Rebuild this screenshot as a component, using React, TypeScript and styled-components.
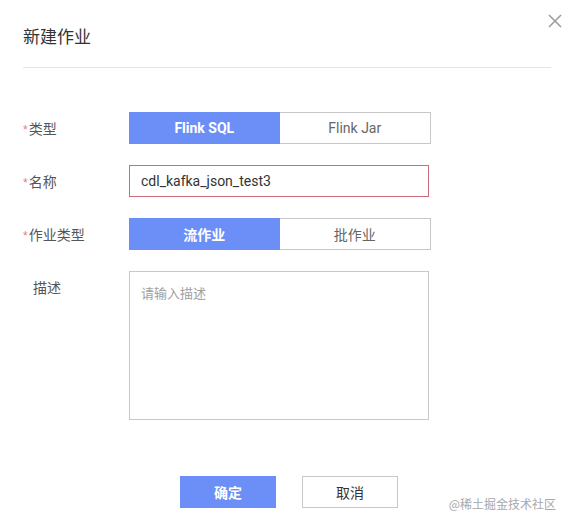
import React, { useState } from "react";
import styled, { createGlobalStyle } from "styled-components";

const GlobalStyle = createGlobalStyle`
  html, body {
    margin: 0;
    padding: 0;
    background: #ffffff;
  }
  body {
    font-family: "Roboto", "Noto Sans CJK SC", sans-serif;
  }
  * {
    box-sizing: border-box;
  }
`;

const Dialog = styled.div`
  position: relative;
  width: 571px;
  height: 525px;
  padding: 0 20px 0 23px;
  background: #fff;
  display: flex;
  flex-direction: column;
`;

const Header = styled.div`
  height: 68px;
  padding-top: 23px;
  border-bottom: 1px solid #e4e4e4;
`;

const Title = styled.h2`
  margin: 0;
  font-size: 17px;
  font-weight: 400;
  color: #333;
  line-height: 26px;
  font-family: "Noto Sans CJK SC", sans-serif;
`;

const CloseButton = styled.button`
  position: absolute;
  top: 11px;
  right: 6px;
  width: 20px;
  height: 20px;
  padding: 0;
  border: none;
  background: transparent;
  cursor: pointer;
  display: flex;
  align-items: center;
  justify-content: center;
`;

const Form = styled.div`
  display: flex;
  flex-direction: column;
  gap: 21px;
  padding-top: 44px;
`;

const Row = styled.div`
  display: flex;
  align-items: flex-start;
`;

const Label = styled.div<{ $required?: boolean }>`
  width: 106px;
  height: 32px;
  line-height: 32px;
  font-size: 14px;
  color: #555;
  padding-left: ${(p) => (p.$required ? "0" : "10px")};
  font-family: "Noto Sans CJK SC", sans-serif;
`;

const Star = styled.span`
  color: #e57a8a;
  font-size: 12px;
  margin-right: 1px;
  font-family: "Liberation Sans", sans-serif;
`;

const Segmented = styled.div`
  display: flex;
  width: 302px;
  height: 32px;
  border: 1px solid #c8c8c8;
`;

const Segment = styled.button<{ $active?: boolean }>`
  flex: 1;
  margin: ${(p) => (p.$active ? "-1px 0 -1px -1px" : "0")};
  height: ${(p) => (p.$active ? "32px" : "30px")};
  border: none;
  padding: 0;
  cursor: pointer;
  font-family: "Roboto", "Noto Sans CJK SC", sans-serif;
  font-size: 14px;
  font-weight: ${(p) => (p.$active ? 700 : 400)};
  background: ${(p) => (p.$active ? "#6b8ff6" : "#fff")};
  color: ${(p) => (p.$active ? "#fff" : "#666")};
`;

const TextInput = styled.input<{ $invalid?: boolean }>`
  width: 300px;
  height: 32px;
  padding: 0 11px;
  border: 1px solid ${(p) => (p.$invalid ? "#cd6c7b" : "#c8c8c8")};
  outline: none;
  font-family: "Roboto", "Noto Sans CJK SC", sans-serif;
  font-size: 14px;
  color: #333;
`;

const TextArea = styled.textarea`
  width: 300px;
  height: 149px;
  padding: 11px 11px;
  border: 1px solid #c8c8c8;
  outline: none;
  resize: none;
  font-family: "Noto Sans CJK SC", sans-serif;
  font-size: 13px;
  color: #333;
  &::placeholder {
    color: #a0a0a0;
  }
`;

const Footer = styled.div`
  display: flex;
  gap: 26px;
  padding-left: 157px;
  margin-top: 56px;
`;

const Button = styled.button<{ $primary?: boolean }>`
  width: 96px;
  height: 32px;
  cursor: pointer;
  font-family: "Noto Sans CJK SC", sans-serif;
  font-size: 14px;
  font-weight: ${(p) => (p.$primary ? 700 : 400)};
  border: 1px solid ${(p) => (p.$primary ? "#6b8ff6" : "#c8c8c8")};
  background: ${(p) => (p.$primary ? "#6b8ff6" : "#fff")};
  color: ${(p) => (p.$primary ? "#fff" : "#333")};
`;

const Watermark = styled.div`
  position: absolute;
  right: 15px;
  bottom: 13px;
  font-size: 12px;
  color: #a8a8a8;
  font-family: "Noto Sans CJK SC", sans-serif;
`;

const App: React.FC = () => {
  const [jobKind, setJobKind] = useState("sql");
  const [runMode, setRunMode] = useState("stream");
  const [name, setName] = useState("cdl_kafka_json_test3");

  return (
    <>
      <GlobalStyle />
      <Dialog>
        <Header>
          <Title>新建作业</Title>
        </Header>
        <CloseButton aria-label="close">
          <svg width="14" height="14" viewBox="0 0 14 14">
            <path d="M1 1L13 13M13 1L1 13" stroke="#9a9a9a" strokeWidth="1.5" />
          </svg>
        </CloseButton>

        <Form>
          <Row>
            <Label $required>
              <Star>*</Star>类型
            </Label>
            <Segmented>
              <Segment $active={jobKind === "sql"} onClick={() => setJobKind("sql")}>
                Flink SQL
              </Segment>
              <Segment $active={jobKind === "jar"} onClick={() => setJobKind("jar")}>
                Flink Jar
              </Segment>
            </Segmented>
          </Row>

          <Row>
            <Label $required>
              <Star>*</Star>名称
            </Label>
            <TextInput $invalid value={name} onChange={(e) => setName(e.target.value)} />
          </Row>

          <Row>
            <Label $required>
              <Star>*</Star>作业类型
            </Label>
            <Segmented>
              <Segment $active={runMode === "stream"} onClick={() => setRunMode("stream")}>
                流作业
              </Segment>
              <Segment $active={runMode === "batch"} onClick={() => setRunMode("batch")}>
                批作业
              </Segment>
            </Segmented>
          </Row>

          <Row>
            <Label>描述</Label>
            <TextArea placeholder="请输入描述" />
          </Row>
        </Form>

        <Footer>
          <Button $primary>确定</Button>
          <Button>取消</Button>
        </Footer>

        <Watermark>@稀土掘金技术社区</Watermark>
      </Dialog>
    </>
  );
};

export default App;
